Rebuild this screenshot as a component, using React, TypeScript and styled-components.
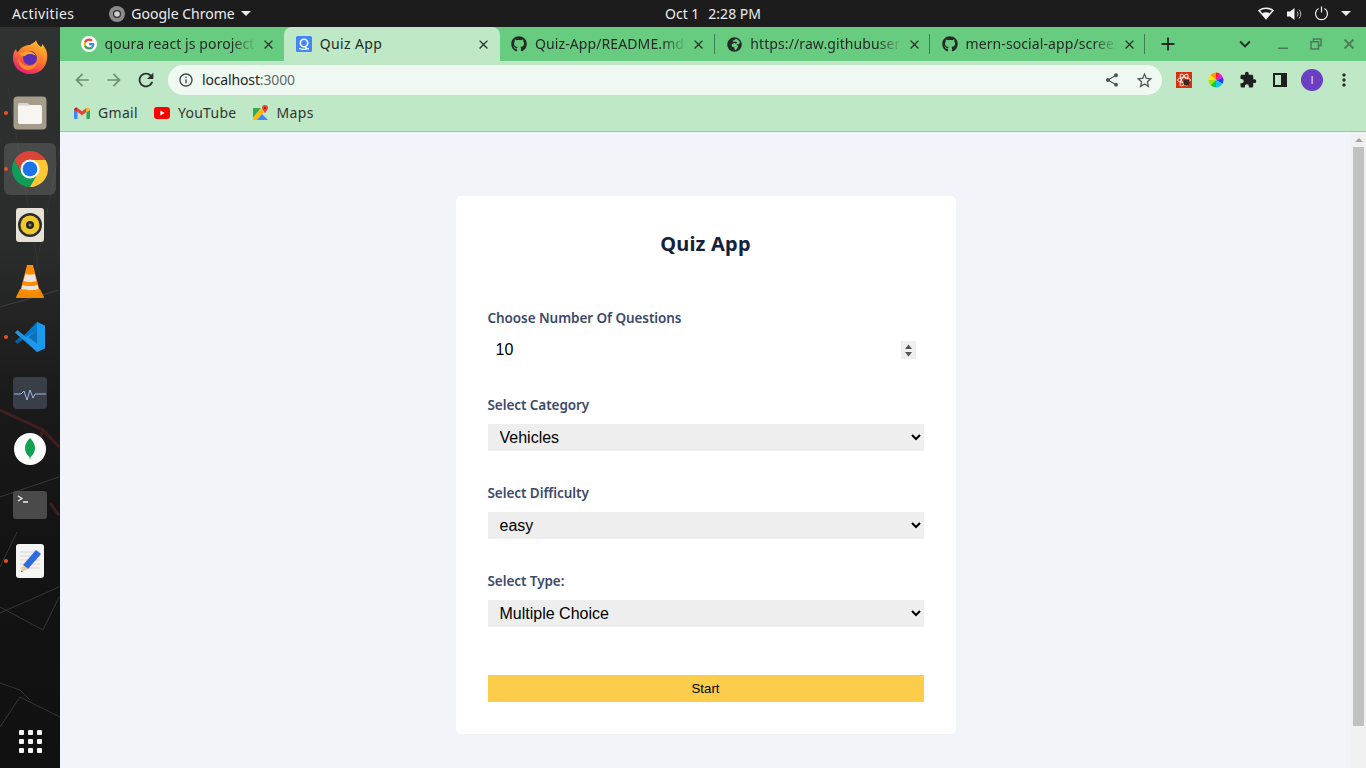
import React from 'react'
import styled, { createGlobalStyle } from 'styled-components'
import { FaGithub, FaGlobeAfrica } from 'react-icons/fa'
import {
  MdAdd,
  MdArrowBack,
  MdArrowForward,
  MdClose,
  MdExpandMore,
  MdExtension,
  MdInfoOutline,
  MdMoreVert,
  MdRefresh,
  MdShare,
  MdStarBorder,
} from 'react-icons/md'

const uiFont = '"Noto Sans", "Open Sans", sans-serif'

const spinnerArrows = encodeURIComponent(
  '<svg xmlns="http://www.w3.org/2000/svg" width="15" height="18"><path fill="#555" d="M7.5 3.500L11 8H4zM4 11h7l-3.500 4.500z"/></svg>',
)

const GlobalStyle = createGlobalStyle`
  html, body {
    margin: 0;
    height: 100%;
    overflow: hidden;
    font-family: ${uiFont};
  }
  * { box-sizing: border-box; }
`

const Desktop = styled.div`
  width: 1366px;
  height: 768px;
  display: flex;
  flex-direction: column;
  overflow: hidden;
`

// gnome top bar
const TopBar = styled.header`
  height: 27px;
  flex: none;
  display: flex;
  align-items: center;
  background: #1c1c1c;
  color: #ececec;
  font-size: 14px;
  padding: 0 12px;
`
const TopLeft = styled.div`
  width: 653px;
  display: flex;
  align-items: center;
`
const Activities = styled.span`
  letter-spacing: 0.4px;
`
const AppMenu = styled.div`
  display: flex;
  align-items: center;
  margin-left: 35px;
  gap: 6px;
`
const Clock = styled.div`
  display: flex;
  gap: 9px;
`
const Tray = styled.div`
  margin-left: auto;
  display: flex;
  align-items: center;
  gap: 12px;
  padding-right: 3px;
`

const Body = styled.div`
  flex: 1;
  display: flex;
  min-height: 0;
`

// ubuntu dock
const Dock = styled.nav`
  position: relative;
  width: 60px;
  flex: none;
  display: flex;
  flex-direction: column;
  padding-top: 2px;
  background: linear-gradient(180deg, #303232 0%, #2a2b2b 30%, #1b1a1a 50%, #131313 70%, #111 100%);
`
const Wallpaper = styled.svg`
  position: absolute;
  inset: 0;
`
const DockSlot = styled.div<{ $active?: boolean }>`
  position: relative;
  height: 56px;
  display: flex;
  align-items: center;
  justify-content: center;
  &::before {
    content: '';
    position: absolute;
    inset: 2px 4px;
    border-radius: 6px;
    background: ${(p) => (p.$active ? 'rgba(255,255,255,.13)' : 'transparent')};
  }
  svg { position: relative; }
`
const RunningDot = styled.span`
  position: absolute;
  left: 4px;
  top: 26px;
  width: 4px;
  height: 4px;
  border-radius: 50%;
  background: #e95420;
`
const AppGrid = styled.div`
  position: relative;
  margin-top: auto;
  margin-bottom: 15px;
  align-self: center;
  display: grid;
  grid-template-columns: repeat(3, 5px);
  gap: 4px;
`
const AppGridDot = styled.span`
  width: 5px;
  height: 5px;
  border-radius: 1px;
  background: #f4f4f4;
`

const Browser = styled.main`
  flex: 1;
  min-width: 0;
  display: flex;
  flex-direction: column;
`

const TabStrip = styled.div`
  height: 34px;
  flex: none;
  display: flex;
  align-items: stretch;
  padding-left: 9px;
  background: #68cc80;
  color: #252a27;
`
const Tab = styled.div<{ $active?: boolean; $sep?: boolean }>`
  position: relative;
  width: 215.25px;
  flex: none;
  display: flex;
  align-items: center;
  padding: 0 8px 0 11.5px;
  font-size: 14px;
  letter-spacing: 0.1px;
  border-radius: 8px 8px 0 0;
  background: ${(p) => (p.$active ? '#bfe8c6' : 'transparent')};
  &::after {
    content: '';
    display: ${(p) => (p.$sep ? 'block' : 'none')};
    position: absolute;
    right: 0;
    top: 7px;
    width: 1px;
    height: 20px;
    background: #3f7f4f;
  }
`
const TabIcon = styled.span`
  width: 16px;
  height: 16px;
  flex: none;
  display: flex;
  align-items: center;
  justify-content: center;
  margin-right: 8px;
`
const TabTitle = styled.span<{ $fade?: boolean; $wide?: boolean }>`
  flex: 1;
  min-width: 0;
  padding-bottom: 2px;
  white-space: nowrap;
  overflow: hidden;
  ${(p) => p.$wide && 'letter-spacing: 0.35px;'}
  ${(p) =>
    p.$fade &&
    `-webkit-mask-image: linear-gradient(90deg, #000 84%, transparent 100%);
     mask-image: linear-gradient(90deg, #000 84%, transparent 100%);`}
`
const TabClose = styled.span`
  width: 16px;
  height: 16px;
  flex: none;
  margin-left: 4px;
  display: flex;
  align-items: center;
  justify-content: center;
  color: #2a2f2c;
`
const StripButton = styled.span<{ $w: number; $color?: string }>`
  width: ${(p) => p.$w}px;
  flex: none;
  display: flex;
  align-items: center;
  justify-content: center;
  color: ${(p) => p.$color || '#252a27'};
`

const Toolbar = styled.div`
  height: 36px;
  flex: none;
  display: flex;
  align-items: center;
  padding: 2px 6px 0;
  background: #bfe8c6;
`
const ToolButton = styled.span<{ $color?: string }>`
  width: 32px;
  height: 32px;
  flex: none;
  display: flex;
  align-items: center;
  justify-content: center;
  color: ${(p) => p.$color || '#2a2f2c'};
`
const Omnibox = styled.div`
  flex: 1;
  height: 30px;
  margin: 0 6px;
  border-radius: 15px;
  background: #eff9f1;
  display: flex;
  align-items: center;
  padding: 0 2px;
  font-size: 14px;
  letter-spacing: -0.15px;
  color: #20252a;
`
const Url = styled.div`
  flex: 1;
  padding-bottom: 2px;
`
const UrlPort = styled.span`
  color: #5f6b66;
`

const Bookmarks = styled.div`
  height: 35px;
  flex: none;
  display: flex;
  align-items: center;
  padding: 0 0 3px 14px;
  gap: 16px;
  background: #bfe8c6;
  border-bottom: 1px solid #9ec4a6;
  font-size: 14px;
  letter-spacing: 0.3px;
  color: #333;
`
const Bookmark = styled.div`
  display: flex;
  align-items: center;
  gap: 8px;
`

const Viewport = styled.div`
  flex: 1;
  display: flex;
  min-height: 0;
  background: #f1f4f9;
`
const Page = styled.div`
  flex: 1;
  display: flex;
  justify-content: center;
  align-items: flex-start;
  padding-top: 64px;
`
const Card = styled.section`
  width: 500px;
  padding: 32px;
  background: #fff;
  border-radius: 5px;
`
const Title = styled.h1`
  margin: 0 0 48px;
  height: 32px;
  line-height: 32px;
  font-size: 20px;
  font-weight: 700;
  letter-spacing: 0.2px;
  text-align: center;
  color: #14213d;
`
const Form = styled.form`
  display: flex;
  flex-direction: column;
  gap: 32px;
`
const Field = styled.div`
  display: flex;
  flex-direction: column;
`
const Label = styled.label`
  height: 20px;
  line-height: 20px;
  margin-bottom: 9px;
  font-size: 13.5px;
  font-weight: 600;
  letter-spacing: -0.07px;
  color: #3c4a6b;
`
const NumberInput = styled.input`
  width: 100%;
  height: 26px;
  padding: 4px 8px;
  border: none;
  outline: none;
  background: #fff;
  color: #000;
  font: 16px "Liberation Sans", Arial, sans-serif;
  &::-webkit-inner-spin-button {
    -webkit-appearance: none;
    appearance: none;
    opacity: 1;
    width: 15px;
    height: 18px;
    background: #efefef url("data:image/svg+xml,${spinnerArrows}") no-repeat center;
  }
`
const Select = styled.select`
  width: 100%;
  height: 27px;
  padding: 0 8px;
  border: none;
  outline: none;
  background: #eee;
  color: #000;
  font: 16px "Liberation Sans", Arial, sans-serif;
`
const StartButton = styled.button`
  display: block;
  width: 100%;
  height: 27px;
  margin-top: 48px;
  padding: 0;
  border: none;
  background: #fccd4b;
  color: #000;
  font: 13.33px "Liberation Sans", Arial, sans-serif;
`

const Scrollbar = styled.div`
  width: 15px;
  flex: none;
  display: flex;
  flex-direction: column;
  align-items: center;
  background: #f1f1f1;
`
const ScrollArrow = styled.span`
  margin: 6px 0 5px;
  height: 0;
  flex: none;
  width: 0;
  border-left: 4px solid transparent;
  border-right: 4px solid transparent;
  border-bottom: 4px solid #a3a3a3;
`
const ScrollThumb = styled.div`
  width: 11px;
  height: 579px;
  background: #c1c1c1;
`

const Caret = styled.span`
  width: 0;
  height: 0;
  border-left: 5px solid transparent;
  border-right: 5px solid transparent;
  border-top: 5px solid #ececec;
`

const ChromeLogo = () => (
  <svg width="36" height="36" viewBox="4 4 40 40">
    <path fill="#db4437" d="M6.68 14A20 20 0 0 1 41.32 14H24L15.34 29Z" />
    <path fill="#0f9d58" d="M6.68 14L15.34 29L24 29L24 44A20 20 0 0 1 6.68 14Z" />
    <path fill="#0f9d58" d="M15.34 29H32.66L24 44Z" />
    <path fill="#fcc934" d="M41.32 14A20 20 0 0 1 24 44L32.66 29L24 14Z" />
    <circle cx="24" cy="24" r="10.5" fill="#fff" />
    <circle cx="24" cy="24" r="8.2" fill="#1a73e8" />
  </svg>
)

const Firefox = () => (
  <svg width="36" height="36" viewBox="0 0 36 36">
    <defs>
      <linearGradient id="ff" x1="0.7" y1="0" x2="0.2" y2="1">
        <stop offset="0" stopColor="#ffc02e" />
        <stop offset="0.45" stopColor="#ff7a2a" />
        <stop offset="1" stopColor="#e5127d" />
      </linearGradient>
    </defs>
    <path
      fill="url(#ff)"
      d="M24 1c1 4 3 5 5 7 1-1 1-2 1-3 4 4 6 9 5 15-1 9-8 15-17 15C8 35 1 28 1 19c0-4 1-7 3-9 0 1 1 3 2 3 3-5 7-7 12-7 2-2 5-2 6-5z"
    />
    <circle cx="18" cy="19" r="7" fill="#5b2fb3" />
    <path fill="#ffa42e" d="M7 15c4-2 8-3 11-2.500 3 .5 5 2.500 6 4.500-3-2-6-2.500-9-1.500l-2 1.500c-3 0-5-1-6-2.500z" />
    <path fill="#ff8a25" d="M6 19c2 5 7 8.500 12 8 4-.5 7-3 8-6.500 0 6-4.500 10.500-10 10.500-6 0-10-5.500-10-12z" />
  </svg>
)

const Files = () => (
  <svg width="34" height="34" viewBox="0 0 34 34">
    <rect x="0.5" y="0.5" width="33" height="33" rx="4" fill="#a59c8c" />
    <path fill="#f7f5f1" d="M5 9a2 2 0 0 1 2-2h7l3 2h10a2 2 0 0 1 2 2v15a2 2 0 0 1-2 2H7a2 2 0 0 1-2-2z" />
    <path fill="#d8d4cc" d="M5 9a2 2 0 0 1 2-2h7l3 2.600H5z" />
  </svg>
)

const Rhythmbox = () => (
  <svg width="28" height="34" viewBox="0 0 28 34">
    <rect width="28" height="34" rx="3" fill="#e6e2d6" />
    <circle cx="14" cy="17" r="12" fill="#2e2d2a" />
    <circle cx="14" cy="17" r="9.500" fill="#f0c92c" />
    <circle cx="14" cy="17" r="4" fill="#26251f" />
    <circle cx="14" cy="17" r="1.500" fill="#8d8a70" />
  </svg>
)

const Vlc = () => (
  <svg width="30" height="34" viewBox="0 0 30 34">
    <path fill="#f28a00" d="M1 33l4-8h20l4 8c0 .6-.4 1-1 1H2c-.6 0-1-.4-1-1z" />
    <path fill="#ff8c00" d="M12 1h6l7 27c-3 2-17 2-20 0z" />
    <path fill="#e8e6e1" d="M10.400 10c3 1 6 1 9.200 0l1.800 7c-4 1.400-9 1.400-12.800 0z" />
    <path fill="#e8e6e1" d="M7.500 21c4 1.400 11 1.400 15 0l1 4c-5 1.600-12 1.600-17 0z" />
  </svg>
)

const VsCode = () => (
  <svg width="32" height="32" viewBox="0 0 32 32">
    <path fill="#0065a9" d="M1 11.500l2.500-2.300 8 6.800-8 6.800L1 20.500l5-4.500z" />
    <path fill="#007acc" d="M23 1l8 3.800v22.400L23 31 8.500 16z" />
    <path fill="#1f9cf0" d="M23 1l8 3.800v22.400L23 31V9.500L12 16 3.500 9.200 1 11.500 23 31z" opacity="0.9" />
    <path fill="#0f6fb5" d="M23 9.500v13L14.500 16z" />
  </svg>
)

const SysMonitor = () => (
  <svg width="34" height="32" viewBox="0 0 34 32">
    <rect width="34" height="32" rx="4" fill="#3a3e46" />
    <path fill="none" stroke="#9db6e8" strokeWidth="1" d="M1 17h7l3-3 3 9 3-10 3 8 2-4h11" />
  </svg>
)

const Mongo = () => (
  <svg width="32" height="32" viewBox="0 0 32 32">
    <circle cx="16" cy="16" r="16" fill="#fdfdfd" />
    <path fill="#12a150" d="M16 5c3 3 5 6 5 10s-2 7-4.400 9L16 27l-.6-3C13 22 11 19 11 15s2-7 5-10z" />
  </svg>
)

const Terminal = () => (
  <svg width="34" height="28" viewBox="0 0 34 28">
    <rect width="34" height="28" rx="3" fill="#4a4a4a" />
    <path fill="none" stroke="#eee" strokeWidth="1.300" d="M5 5l4 2.500-4 2.500M10 11h5" />
  </svg>
)

const Editor = () => (
  <svg width="28" height="34" viewBox="0 0 28 34">
    <rect width="28" height="34" rx="3" fill="#f4f4f2" />
    <path stroke="#d6d6d6" strokeWidth="1" d="M4 8h20M4 12h20M4 16h20M4 20h20M4 24h20" />
    <path fill="#2f6be0" d="M20 6l5 4-13 15-5-4z" />
    <path fill="#e8c9a0" d="M7 21l5 4-7 3z" />
    <path fill="#333" d="M5.600 26.400L5 28l2-.8z" />
  </svg>
)

const WifiIcon = () => (
  <svg width="16" height="13" viewBox="0 0 16 13">
    <path fill="none" stroke="#f2f2f2" strokeWidth="1.500" d="M1 3.500C5 .5 11 .5 15 3.500L8 11.500Z" />
    <path fill="#f2f2f2" d="M4 6.300c2.400-1.500 5.600-1.500 8 0L8 12z" />
  </svg>
)

const VolumeIcon = () => (
  <svg width="16" height="14" viewBox="0 0 16 14">
    <path fill="#f2f2f2" d="M1 4.500h3L8.500 1v12L4 9.500H1z" />
    <path fill="none" stroke="#b9b9b9" strokeWidth="1" d="M11 4.500a3.500 3.500 0 0 1 0 5M13 2.500a6.500 6.500 0 0 1 0 9" />
  </svg>
)

const PowerIcon = () => (
  <svg width="15" height="15" viewBox="0 0 15 15">
    <path fill="none" stroke="#f2f2f2" strokeWidth="1.200" d="M4.500 2.500a6 6 0 1 0 6 0M7.500 .5v6" />
  </svg>
)

const ChromeLogoGrey = () => (
  <svg width="16" height="16" viewBox="0 0 16 16">
    <circle cx="8" cy="8" r="8" fill="#8b8b8b" />
    <circle cx="8" cy="8" r="4" fill="#2a2a2a" />
    <circle cx="8" cy="8" r="2.800" fill="#d0d0d0" />
  </svg>
)

const QuizFavicon = () => (
  <svg width="16" height="16" viewBox="0 0 16 16">
    <rect width="16" height="16" rx="1.500" fill="#4285f4" />
    <circle cx="8" cy="7" r="3.700" fill="none" stroke="#fff" strokeWidth="1.600" />
    <path fill="none" stroke="#fff" strokeWidth="1.300" d="M9 10.500l1.500 2M3 12.500c3 1 7 1 10 .2" />
  </svg>
)

const GoogleFavicon = () => (
  <svg width="16" height="16" viewBox="0 0 16 16">
    <circle cx="8" cy="8" r="8" fill="#fff" />
    <svg x="2" y="2" width="12" height="12" viewBox="0 0 48 48">
      <path fill="#4285f4" d="M45 24.500c0-1.500-.1-3-.4-4.500H24v8.500h11.800c-.5 2.700-2 5-4.400 6.600l7 5.400c4.100-3.800 6.600-9.400 6.600-16z" />
      <path fill="#34a853" d="M24 46c5.900 0 10.900-2 14.400-5.400l-7-5.400c-2 1.300-4.500 2.100-7.400 2.100-5.700 0-10.500-3.800-12.200-9H4.500v5.600C8.100 41 15.500 46 24 46z" />
      <path fill="#fbbc05" d="M11.800 28.300c-.9-2.700-.9-5.800 0-8.600v-5.600H4.500c-3 6-3 13.800 0 19.800z" />
      <path fill="#ea4335" d="M24 10.800c3.200 0 6 1.100 8.300 3.200l6.200-6.200C34.800 4.300 29.800 2 24 2 15.500 2 8.100 7 4.500 14.100l7.300 5.600c1.700-5.100 6.500-8.900 12.200-8.900z" />
    </svg>
  </svg>
)

const Gmail = () => (
  <svg width="16" height="12" viewBox="0 0 16 12">
    <path fill="#4285f4" d="M0 3v8c0 .6.400 1 1 1h2.500V5z" />
    <path fill="#34a853" d="M16 3v8c0 .6-.4 1-1 1h-2.500V5z" />
    <path fill="#ea4335" d="M3.500 5V1L8 4.300 12.500 1v4L8 8.200z" />
    <path fill="#c5221f" d="M0 3c0-2 2-3 3.500-2v4z" />
    <path fill="#fbbc04" d="M16 3c0-2-2-3-3.500-2v4z" />
  </svg>
)

const YouTube = () => (
  <svg width="16" height="12" viewBox="0 0 16 12">
    <rect width="16" height="12" rx="3" fill="#f00" />
    <path fill="#fff" d="M6.300 3.500L10.700 6 6.300 8.500z" />
  </svg>
)

const Maps = () => (
  <svg width="16" height="16" viewBox="0 0 16 16">
    <path fill="#34a853" d="M0 3h8L0 13z" />
    <path fill="#fbbc04" d="M0 13l8-10 3 4-7 8H0z" />
    <path fill="#4285f4" d="M4 15l5-6 6 6z" />
    <path fill="#e8eaed" d="M8 3l3 4 1 1V3z" opacity="0.9" />
    <path fill="#ea4335" d="M12 0a3 3 0 0 1 3 3c0 2-2 3-3 5.500C11 6 9 5 9 3a3 3 0 0 1 3-3z" />
    <circle cx="12" cy="3" r="1" fill="#a50e0e" />
  </svg>
)

const RedExtension = () => (
  <svg width="16" height="16" viewBox="0 0 16 16">
    <rect width="16" height="16" fill="#d9300f" />
    <g fill="none" stroke="#fff" strokeWidth="0.900">
      <ellipse cx="8" cy="8" rx="6.500" ry="2.500" />
      <ellipse cx="8" cy="8" rx="6.500" ry="2.500" transform="rotate(60 8 8)" />
      <ellipse cx="8" cy="8" rx="6.500" ry="2.500" transform="rotate(120 8 8)" />
    </g>
    <circle cx="10.500" cy="10.500" r="3.200" fill="#3a2a22" />
  </svg>
)

const ColorWheel = () => (
  <svg width="16" height="16" viewBox="0 0 16 16">
    <path fill="#ff1e1e" d="M8 8V.5a7.500 7.500 0 0 1 3.700 1z" />
    <path fill="#f318d8" d="M8 8l3.700-6.500A7.500 7.500 0 0 1 15 5.500z" />
    <path fill="#6a1bf0" d="M8 8l7-2.500a7.500 7.500 0 0 1 .5 2.500z" />
    <path fill="#1a44f5" d="M8 8h7.500a7.500 7.500 0 0 1-1 3.800z" />
    <path fill="#12c4e8" d="M8 8l6.500 3.800A7.500 7.500 0 0 1 8 15.500z" />
    <path fill="#10c83a" d="M8 8v7.500a7.500 7.500 0 0 1-5.500-2.400z" />
    <path fill="#a8e010" d="M8 8l-5.500 5.100A7.500 7.500 0 0 1 .5 8z" />
    <path fill="#ffe600" d="M8 8H.5a7.500 7.500 0 0 1 2-5z" />
    <path fill="#ff9a00" d="M8 8L2.500 3A7.500 7.500 0 0 1 8 .5z" />
  </svg>
)

const SidePanel = () => (
  <svg width="14" height="14" viewBox="0 0 14 14">
    <rect x="1" y="1" width="12" height="12" fill="none" stroke="#1f1f1f" strokeWidth="2" />
    <rect x="8" y="1" width="5" height="12" fill="#1f1f1f" />
  </svg>
)

const Avatar = styled.span`
  width: 22px;
  height: 22px;
  border-radius: 50%;
  background: #6a3fc4;
  color: #e6dcf8;
  font: 11px "Liberation Sans", Arial, sans-serif;
  display: flex;
  align-items: center;
  justify-content: center;
`

const WinMin = () => (
  <svg width="12" height="12" viewBox="0 0 12 12">
    <rect x="1" y="9.500" width="10" height="1.500" fill="#4c7a58" />
  </svg>
)
const WinRestore = () => (
  <svg width="12" height="12" viewBox="0 0 12 12">
    <path fill="none" stroke="#4c7a58" strokeWidth="1.500" d="M3.500 3V1h7.500v6.500H8.500M1 3.800h7.500V11H1z" />
  </svg>
)
const WinClose = () => (
  <svg width="12" height="12" viewBox="0 0 12 12">
    <path stroke="#4c7a58" strokeWidth="1.800" d="M1.500 1.500l9 9M10.500 1.500l-9 9" />
  </svg>
)

const dockApps = [
  { key: 'firefox', icon: <Firefox /> },
  { key: 'files', icon: <Files />, running: true },
  { key: 'chrome', icon: <ChromeLogo />, running: true, active: true },
  { key: 'rhythmbox', icon: <Rhythmbox /> },
  { key: 'vlc', icon: <Vlc /> },
  { key: 'vscode', icon: <VsCode />, running: true },
  { key: 'monitor', icon: <SysMonitor /> },
  { key: 'mongo', icon: <Mongo /> },
  { key: 'terminal', icon: <Terminal /> },
  { key: 'editor', icon: <Editor />, running: true },
]

const tabs = [
  { title: 'qoura react js poroject', icon: <GoogleFavicon /> },
  { title: 'Quiz App', icon: <QuizFavicon />, active: true, wide: true },
  { title: 'Quiz-App/README.md at main', icon: <FaGithub size={16} />, sep: true },
  { title: 'https://raw.githubusercontent', icon: <FaGlobeAfrica size={15} />, sep: true },
  { title: 'mern-social-app/screenshot', icon: <FaGithub size={16} />, sep: true },
]

const App = () => (
  <Desktop>
    <GlobalStyle />
    <TopBar>
      <TopLeft>
        <Activities>Activities</Activities>
        <AppMenu>
          <ChromeLogoGrey />
          Google Chrome
          <Caret />
        </AppMenu>
      </TopLeft>
      <Clock>
        <span>Oct 1</span>
        <span>2:28 PM</span>
      </Clock>
      <Tray>
        <WifiIcon />
        <VolumeIcon />
        <PowerIcon />
        <Caret />
      </Tray>
    </TopBar>
    <Body>
      <Dock>
        <Wallpaper width="60" height="741" viewBox="0 0 60 741">
          <g fill="none" stroke="#5a5a5a" strokeWidth="1" opacity="0.5">
            <path d="M0 280L59 263M0 470L59 450M17 505L0 540" />
            <path d="M0 580L43 603 59 570M0 586L59 560M0 656L20 663 30 673M0 700L20 670 60 690" />
            <path d="M8 60L40 250M60 120L30 270" opacity="0.4" />
          </g>
          <g fill="none" stroke="#4a2022" strokeWidth="3" opacity="0.8">
            <path d="M0 383L43 403 59 420M43 403L32 433M50 476L59 488" />
          </g>
        </Wallpaper>
        {dockApps.map((a) => (
          <DockSlot key={a.key} $active={a.active}>
            {a.running && <RunningDot />}
            {a.icon}
          </DockSlot>
        ))}
        <AppGrid>
          {Array.from({ length: 9 }, (_, i) => (
            <AppGridDot key={i} />
          ))}
        </AppGrid>
      </Dock>
      <Browser>
        <TabStrip>
          {tabs.map((t) => (
            <Tab key={t.title} $active={t.active} $sep={t.sep}>
              <TabIcon>{t.icon}</TabIcon>
              <TabTitle $fade={!t.active} $wide={t.wide}>
                {t.title}
              </TabTitle>
              <TabClose>
                <MdClose size={15} />
              </TabClose>
            </Tab>
          ))}
          <StripButton $w={45}>
            <MdAdd size={22} />
          </StripButton>
          <StripButton $w={39} />
          <StripButton $w={32}>
            <MdExpandMore size={22} />
          </StripButton>
          <StripButton $w={6} />
          <StripButton $w={32}>
            <WinMin />
          </StripButton>
          <StripButton $w={33}>
            <WinRestore />
          </StripButton>
          <StripButton $w={33}>
            <WinClose />
          </StripButton>
        </TabStrip>
        <Toolbar>
          <ToolButton $color="#6d8f77">
            <MdArrowBack size={20} />
          </ToolButton>
          <ToolButton $color="#6d8f77">
            <MdArrowForward size={20} />
          </ToolButton>
          <ToolButton>
            <MdRefresh size={22} />
          </ToolButton>
          <Omnibox>
            <ToolButton $color="#3d4742">
              <MdInfoOutline size={16} />
            </ToolButton>
            <Url>
              localhost<UrlPort>:3000</UrlPort>
            </Url>
            <ToolButton $color="#4d5751">
              <MdShare size={16} />
            </ToolButton>
            <ToolButton $color="#4d5751">
              <MdStarBorder size={19} />
            </ToolButton>
          </Omnibox>
          <ToolButton>
            <RedExtension />
          </ToolButton>
          <ToolButton>
            <ColorWheel />
          </ToolButton>
          <ToolButton $color="#1f1f1f">
            <MdExtension size={18} />
          </ToolButton>
          <ToolButton>
            <SidePanel />
          </ToolButton>
          <ToolButton>
            <Avatar>I</Avatar>
          </ToolButton>
          <ToolButton>
            <MdMoreVert size={20} />
          </ToolButton>
        </Toolbar>
        <Bookmarks>
          <Bookmark>
            <Gmail />
            Gmail
          </Bookmark>
          <Bookmark>
            <YouTube />
            YouTube
          </Bookmark>
          <Bookmark>
            <Maps />
            Maps
          </Bookmark>
        </Bookmarks>
        <Viewport>
          <Page>
            <Card>
              <Title>Quiz App</Title>
              <Form onSubmit={(e) => e.preventDefault()}>
                <Field>
                  <Label>Choose Number Of Questions</Label>
                  <NumberInput type="number" defaultValue={10} />
                </Field>
                <Field>
                  <Label>Select Category</Label>
                  <Select defaultValue="Vehicles">
                    <option>General Knowledge</option>
                    <option>Vehicles</option>
                  </Select>
                </Field>
                <Field>
                  <Label>Select Difficulty</Label>
                  <Select defaultValue="easy">
                    <option>easy</option>
                    <option>medium</option>
                    <option>hard</option>
                  </Select>
                </Field>
                <Field>
                  <Label>Select Type:</Label>
                  <Select defaultValue="Multiple Choice">
                    <option>Multiple Choice</option>
                    <option>True / False</option>
                  </Select>
                </Field>
              </Form>
              <StartButton type="button">Start</StartButton>
            </Card>
          </Page>
          <Scrollbar>
            <ScrollArrow />
            <ScrollThumb />
          </Scrollbar>
        </Viewport>
      </Browser>
    </Body>
  </Desktop>
)

export default App
